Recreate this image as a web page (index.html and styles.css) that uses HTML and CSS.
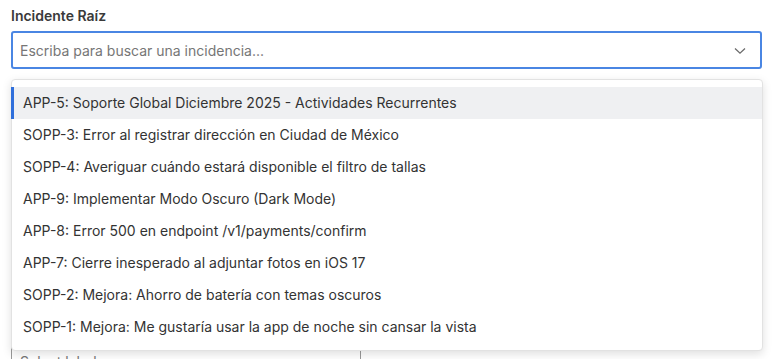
FILE: index.html
```html
<!DOCTYPE html>
<html lang="es">
<head>
<meta charset="utf-8">
<link rel="stylesheet" href="styles.css">
</head>
<body>
<div class="form">
  <div class="field">
    <label class="label">Incidente Raíz</label>
    <div class="combo">
      <div class="input">
        <span class="placeholder">Escriba para buscar una incidencia...</span>
        <svg class="chev" width="12" height="8" viewBox="0 0 12 8"><path d="M1 1.5 L6 6.2 L11 1.5" fill="none" stroke="#6b6b6b" stroke-width="1.3"/></svg>
      </div>
      <ul class="menu">
        <li class="opt active">APP-5: Soporte Global Diciembre 2025 - Actividades Recurrentes</li>
        <li class="opt">SOPP-3: Error al registrar dirección en Ciudad de México</li>
        <li class="opt">SOPP-4: Averiguar cuándo estará disponible el filtro de tallas</li>
        <li class="opt">APP-9: Implementar Modo Oscuro (Dark Mode)</li>
        <li class="opt">APP-8: Error 500 en endpoint /v1/payments/confirm</li>
        <li class="opt">APP-7: Cierre inesperado al adjuntar fotos en iOS 17</li>
        <li class="opt">SOPP-2: Mejora: Ahorro de batería con temas oscuros</li>
        <li class="opt">SOPP-1: Mejora: Me gustaría usar la app de noche sin cansar la vista</li>
      </ul>
    </div>
  </div>
  <div class="row">
    <div class="select"><span class="placeholder">Select label...</span></div>
  </div>
</div>
</body>
</html>
```
FILE: styles.css
```css
html, body {
  margin: 0;
  padding: 0;
  background: #fff;
  font-family: Inter, "Noto Sans", sans-serif;
  color: #333;
}
.form {
  padding: 6px 13px 0 11px;
}
.label {
  display: block;
  font-size: 14px;
  font-weight: 600;
  line-height: 20px;
  color: #3a3a3a;
  margin-bottom: 5px;
}
.combo {
  position: relative;
}
.input {
  box-sizing: border-box;
  height: 38px;
  border: 2px solid #4a86e3;
  border-radius: 3px;
  display: flex;
  align-items: center;
  padding: 0 14px 0 7px;
  justify-content: space-between;
}
.placeholder {
  font-size: 14px;
  color: #767676;
}
.chev {
  display: block;
  margin-top: 1px;
}
.menu {
  position: absolute;
  top: 48px;
  left: 0;
  right: -1px;
  margin: 0;
  padding: 7px 0;
  list-style: none;
  background: #fff;
  border: 1px solid #e2e2e2;
  border-radius: 4px;
  box-shadow: 0 3px 10px rgba(0, 0, 0, 0.13);
  z-index: 2;
}
.opt {
  height: 32px;
  line-height: 32px;
  font-size: 14px;
  color: #333;
  padding-left: 9px;
  border-left: 3px solid transparent;
  margin-left: -1px;
  white-space: nowrap;
}
.opt.active {
  background: #eff0f2;
  border-left-color: #2f6fdb;
}
.row {
  display: grid;
  grid-template-columns: 350px 1fr;
  margin-top: 273px;
}
.select {
  box-sizing: border-box;
  height: 38px;
  border: 1px solid #999;
  border-radius: 3px;
  padding: 0 8px;
  display: flex;
  align-items: center;
}
```
